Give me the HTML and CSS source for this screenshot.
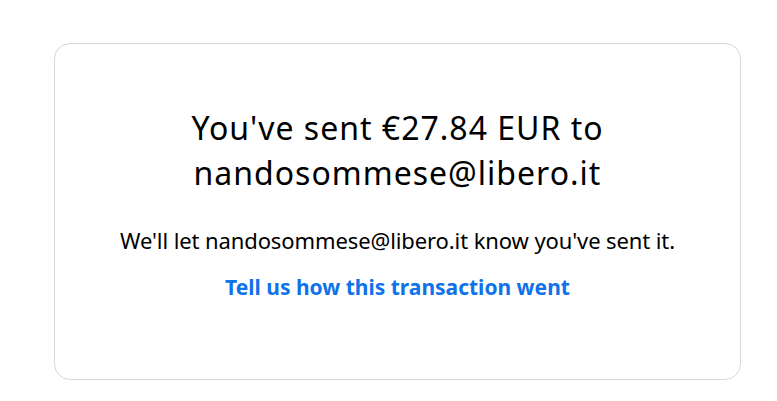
FILE: index.html
```html
<!DOCTYPE html>
<html lang="en">
<head>
    <meta charset="UTF-8">
    <meta name="viewport" content="width=device-width, initial-scale=1.0">
    <title>Payment sent</title>
    <link rel="stylesheet" href="styles.css">
</head>
<body>
    <div class="card">
        <h1 class="title">You've sent €27.84 EUR to nandosommese@libero.it</h1>
        <p class="note">We'll let nandosommese@libero.it know you've sent it.</p>
        <a class="feedback" href="#">Tell us how this transaction went</a>
    </div>
</body>
</html>
```
FILE: styles.css
```css
body {
    margin: 0;
    padding: 43px 36px 0 54px;
    font-family: "Noto Sans", "Open Sans", sans-serif;
    color: #000;
    background: #fff;
}

.card {
    height: 337px;
    box-sizing: border-box;
    border: 1px solid #dbd8d0;
    border-radius: 16px;
    padding: 61px 20px 0;
    display: flex;
    flex-direction: column;
    align-items: center;
    text-align: center;
}

.title {
    margin: 0;
    width: 440px;
    font-size: 32px;
    font-weight: 400;
    line-height: 45px;
    letter-spacing: 1px;
}

.note {
    margin: 30px 0 0;
    font-size: 22px;
    line-height: 30px;
    letter-spacing: -0.1px;
}

.feedback {
    margin-top: 18px;
    font-size: 21px;
    font-weight: 700;
    line-height: 28px;
    color: #1072eb;
    text-decoration: none;
}
```
